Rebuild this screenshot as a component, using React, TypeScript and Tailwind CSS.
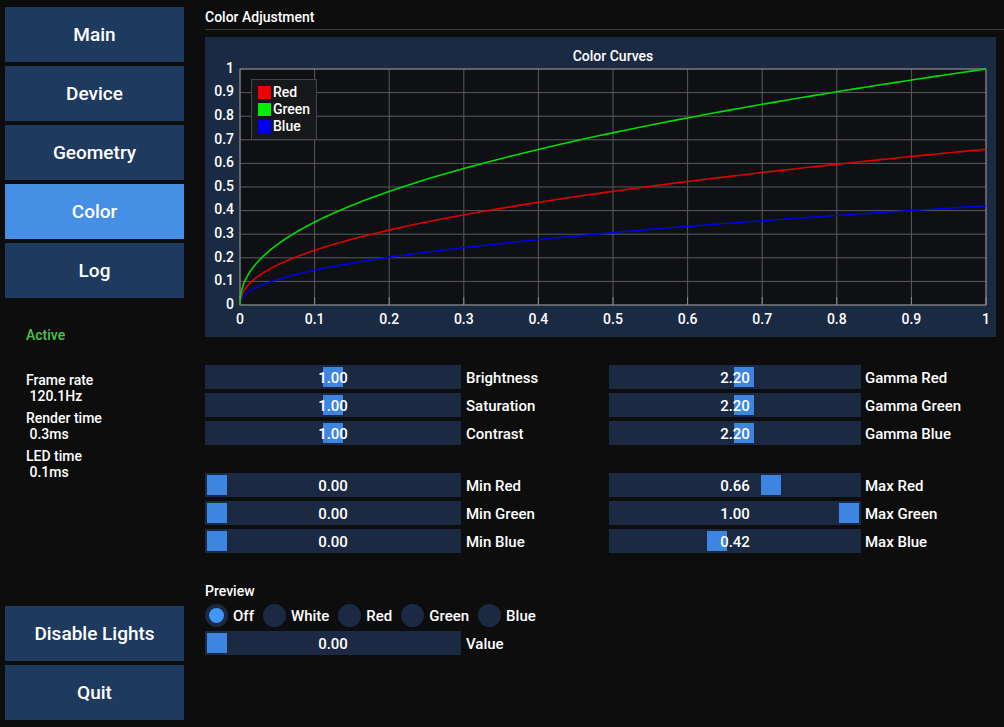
import React from 'react';

const FONT = { fontFamily: 'Roboto, "Liberation Sans", sans-serif' };

// plot geometry inside the 791x300 frame
const PX0 = 35;
const PX1 = 781;
const PY0 = 268;
const PY1 = 32;

const sx = (v: number) => PX0 + v * (PX1 - PX0);
const sy = (v: number) => PY0 - v * (PY0 - PY1);

const curve = (max: number) => {
    const pts: string[] = [];
    for (let i = 0; i <= 300; i++) {
        const x = Math.pow(i / 300, 2);
        const y = max * Math.pow(x, 1 / 2.2);
        pts.push(`${sx(x).toFixed(2)},${sy(y).toFixed(2)}`);
    }
    return 'M' + pts.join(' L');
};

const ticks = [0, 0.1, 0.2, 0.3, 0.4, 0.5, 0.6, 0.7, 0.8, 0.9, 1];
const tickLabel = (t: number) => (t === 0 ? '0' : t === 1 ? '1' : t.toFixed(1));

const CurvesPlot = () => (
    <div className="w-[791px] h-[300px] bg-[#1b2a43]">
        <svg width={791} height={300} style={FONT}>
            <text x={408} y={20} fill="#fff" fontSize={14} fontWeight={500} textAnchor="middle" dominantBaseline="middle">
                Color Curves
            </text>
            <rect x={PX0} y={PY1} width={PX1 - PX0} height={PY0 - PY1} fill="#0f1014" />
            {ticks.map((t) => (
                <g key={t}>
                    <line x1={sx(t)} x2={sx(t)} y1={PY1} y2={PY0} stroke="#5a5a5e" strokeWidth={1} />
                    <line x1={PX0} x2={PX1} y1={sy(t)} y2={sy(t)} stroke="#5a5a5e" strokeWidth={1} />
                    <line x1={sx(t)} x2={sx(t)} y1={PY0 - 8} y2={PY0} stroke="#8a8a8e" strokeWidth={1} />
                    <text x={sx(t)} y={283} fill="#fff" fontSize={14} fontWeight={500} textAnchor="middle" dominantBaseline="middle">
                        {tickLabel(t)}
                    </text>
                    <text x={29} y={sy(t)} fill="#fff" fontSize={14} fontWeight={500} textAnchor="end" dominantBaseline="middle">
                        {tickLabel(t)}
                    </text>
                </g>
            ))}
            <rect x={PX0} y={PY1} width={PX1 - PX0} height={PY0 - PY1} fill="none" stroke="#8a8a8e" strokeWidth={1} />
            <path d={curve(0.42)} fill="none" stroke="#0000e6" strokeWidth={1.6} />
            <path d={curve(0.66)} fill="none" stroke="#dd0000" strokeWidth={1.6} />
            <path d={curve(1)} fill="none" stroke="#00dc00" strokeWidth={1.6} />

            {/* legend */}
            <rect x={46.5} y={42.5} width={65} height={60} fill="#17181b" stroke="#444448" strokeWidth={1} />
            {[
                { c: '#ee0000', n: 'Red' },
                { c: '#00ee00', n: 'Green' },
                { c: '#0000ee', n: 'Blue' },
            ].map((l, i) => (
                <g key={l.n}>
                    <rect x={53} y={49 + i * 17} width={13} height={13} fill={l.c} />
                    <text x={68} y={56.5 + i * 17} fill="#fff" fontSize={14} fontWeight={500} dominantBaseline="middle">
                        {l.n}
                    </text>
                </g>
            ))}
        </svg>
    </div>
);

interface SliderProps {
    value: string;
    pos: number;
    width: number;
    label: string;
    gap: number;
}

const Slider = ({ value, pos, width, label, gap }: SliderProps) => (
    <div className="flex items-center h-[24px]">
        <div className="relative h-[24px] bg-[#1b2a42] flex items-center justify-center" style={{ width }}>
            <div
                className="absolute top-[2px] w-[20px] h-[20px] bg-[#3d85e0]"
                style={{ left: 2 + pos * (width - 24) }}
            />
            <span className="relative translate-y-px text-white text-[15px] font-medium">{value}</span>
        </div>
        <span className="translate-y-px text-white text-[15px] font-medium" style={{ marginLeft: gap }}>
            {label}
        </span>
    </div>
);

const NavButton = ({ label, active }: { label: string; active?: boolean }) => (
    <button
        className={`w-[179px] h-[55px] flex items-center justify-center text-white text-[19px] font-medium ${
            active ? 'bg-[#4590e4]' : 'bg-[#1f3a5f]'
        }`}
    >
        <span className="translate-y-px">{label}</span>
    </button>
);

const Radio = ({ label, checked }: { label: string; checked?: boolean }) => (
    <div className="flex items-center gap-[5px]">
        <div className="w-[23px] h-[23px] rounded-full bg-[#1b2a42] flex items-center justify-center">
            {checked && <div className="w-[15px] h-[15px] rounded-full bg-[#4296fa]" />}
        </div>
        <span className="translate-y-px text-white text-[15px] font-medium">{label}</span>
    </div>
);

export default function App() {
    return (
        <div className="flex w-[1004px] h-[727px] bg-[#0d0d0d] overflow-hidden" style={FONT}>
            {/* Sidebar */}
            <aside className="w-[184px] pl-[5px] pt-[7px] pb-[7px] flex flex-col">
                <div className="flex flex-col gap-[4px]">
                    <NavButton label="Main" />
                    <NavButton label="Device" />
                    <NavButton label="Geometry" />
                    <NavButton label="Color" active />
                    <NavButton label="Log" />
                </div>

                <div className="pl-[21px] text-[14px] font-medium leading-[16px] text-white">
                    <div className="mt-[29px] text-[#4cc44c]">Active</div>
                    <div className="mt-[29px]">Frame rate</div>
                    <div className="whitespace-pre"> 120.1Hz</div>
                    <div className="mt-[6px]">Render time</div>
                    <div className="whitespace-pre"> 0.3ms</div>
                    <div className="mt-[6px]">LED time</div>
                    <div className="whitespace-pre"> 0.1ms</div>
                </div>

                <div className="mt-auto flex flex-col gap-[4px]">
                    <NavButton label="Disable Lights" />
                    <NavButton label="Quit" />
                </div>
            </aside>

            {/* Main panel */}
            <main className="flex-1 pl-[21px] pt-[7px] pr-[8px]">
                <div className="h-[20px] flex items-center text-white text-[14px] font-medium">Color Adjustment</div>
                <div className="mt-[2px] h-px bg-[#3a3a3e] mr-[-8px]" />
                <div className="mt-[7px]">
                    <CurvesPlot />
                </div>

                <div className="mt-[28px] flex">
                    <div className="w-[404px] flex flex-col gap-[4px]">
                        <Slider value="1.00" pos={0.5} width={256} label="Brightness" gap={5} />
                        <Slider value="1.00" pos={0.5} width={256} label="Saturation" gap={5} />
                        <Slider value="1.00" pos={0.5} width={256} label="Contrast" gap={5} />
                    </div>
                    <div className="flex flex-col gap-[4px]">
                        <Slider value="2.20" pos={0.54} width={252} label="Gamma Red" gap={4} />
                        <Slider value="2.20" pos={0.54} width={252} label="Gamma Green" gap={4} />
                        <Slider value="2.20" pos={0.54} width={252} label="Gamma Blue" gap={4} />
                    </div>
                </div>

                <div className="mt-[28px] flex">
                    <div className="w-[404px] flex flex-col gap-[4px]">
                        <Slider value="0.00" pos={0} width={256} label="Min Red" gap={5} />
                        <Slider value="0.00" pos={0} width={256} label="Min Green" gap={5} />
                        <Slider value="0.00" pos={0} width={256} label="Min Blue" gap={5} />
                    </div>
                    <div className="flex flex-col gap-[4px]">
                        <Slider value="0.66" pos={0.66} width={252} label="Max Red" gap={4} />
                        <Slider value="1.00" pos={1} width={252} label="Max Green" gap={4} />
                        <Slider value="0.42" pos={0.42} width={252} label="Max Blue" gap={4} />
                    </div>
                </div>

                <div className="mt-[28px] h-[20px] flex items-center text-white text-[14px] font-medium">Preview</div>
                <div className="mt-[2px] h-[24px] flex items-center gap-[9px]">
                    <Radio label="Off" checked />
                    <Radio label="White" />
                    <Radio label="Red" />
                    <Radio label="Green" />
                    <Radio label="Blue" />
                </div>
                <div className="mt-[4px]">
                    <Slider value="0.00" pos={0} width={256} label="Value" gap={5} />
                </div>
            </main>
        </div>
    );
}
